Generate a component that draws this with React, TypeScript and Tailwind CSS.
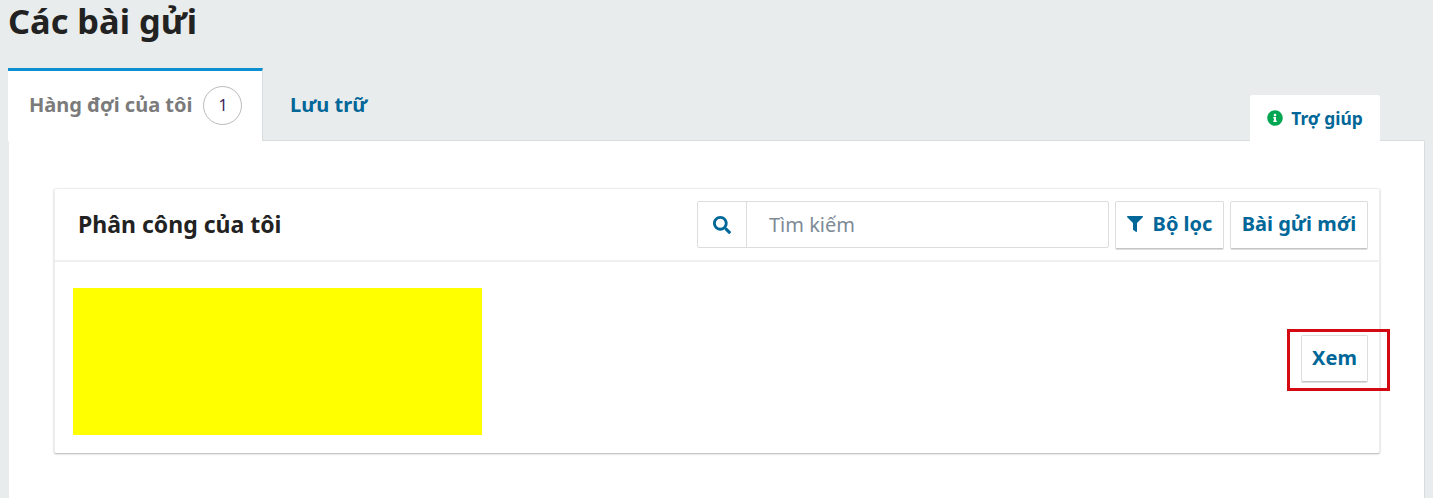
import React from "react";
import { FaInfoCircle, FaFilter, FaSearch } from "react-icons/fa";

const font = "font-['Noto_Sans','Open_Sans',sans-serif]";

export default function App() {
  return (
    <div className={`${font} h-[498px] w-[1433px] overflow-hidden bg-[#e9ecec]`}>
      <h1 className="ml-2 h-[68px] text-[34.4px] font-bold leading-[42px] text-[#222222]">Các bài gửi</h1>
      <div className="flex h-[72px] items-end pl-2 pr-[53px]">
        <div className="relative z-10 -mb-px flex h-[73px] w-[255px] shrink-0 items-center border-t-[3px] border-r border-t-[#0a8fd1] border-r-[#d9dcde] bg-white pb-[2px] pl-[21px]">
          <span className="text-[20px] font-bold text-[#7b7b7b]">Hàng đợi của tôi</span>
          <span className="ml-[11px] flex h-[39px] w-[39px] items-center justify-center rounded-full border border-[#bbbbbb] text-[16px] text-[#3d1f5c]">1</span>
        </div>
        <div className="flex h-[72px] items-center pl-[27px] pt-[2px]">
          <span className="text-[20px] font-bold text-[#006798]">Lưu trữ</span>
        </div>
        <div className="relative z-10 -mb-px ml-auto flex h-[46px] w-[130px] items-center justify-center gap-[8px] rounded-t-[2px] bg-white">
          <FaInfoCircle className="text-[16px] text-[#00a651]" />
          <span className="text-[17.4px] font-bold text-[#006798]">Trợ giúp</span>
        </div>
      </div>
      <div className="ml-[9px] mr-[8px] h-[358px] rounded-tr-[2px] border-t border-r border-[#d9dcde] bg-white pl-[45px] pr-[44px] pt-[47px]">
        <div className="h-[265px] rounded-[2px] border-t border-l border-r border-[#eeeeee] shadow-[0_1px_2px_rgba(0,0,0,0.3)]">
          <div className="flex h-[73px] items-center border-b-2 border-[#f0f0f0] pl-[23px] pr-[11px]">
            <h2 className="text-[23px] font-bold text-[#222222]">Phân công của tôi</h2>
            <div className="ml-auto flex h-[47px] w-[412px] rounded-[2px] border border-[#dddddd]">
              <div className="flex w-[49px] items-center justify-center border-r border-[#dddddd]">
                <FaSearch className="text-[18px] text-[#006798]" />
              </div>
              <span className="flex items-center pl-[22px] text-[20px] text-[#7d8a96]">Tìm kiếm</span>
            </div>
            <button className="ml-[6px] flex h-[48px] w-[109px] items-center justify-center gap-[10px] rounded-[2px] border border-[#dddddd] border-b-[#c4c4c4] pb-[2px] text-[20px] font-bold text-[#006798] shadow-[0_1px_0_#dddddd]">
              <FaFilter className="text-[16px]" />
              <span>Bộ lọc</span>
            </button>
            <button className="ml-[6px] h-[48px] w-[138px] rounded-[2px] border border-[#dddddd] border-b-[#c4c4c4] pb-[2px] text-[20px] font-bold text-[#006798] shadow-[0_1px_0_#dddddd]">Bài gửi mới</button>
          </div>
          <div className="flex items-center pl-[18px] pr-[11px] pt-[26px]">
            <div className="h-[147px] w-[409px] bg-[#ffff00]" />
            <div className="relative mb-[6px] ml-auto">
              <button className="block h-[47px] w-[67px] rounded-[2px] border border-[#dddddd] border-b-[#c4c4c4] pb-[2px] text-[20px] font-bold text-[#006798] shadow-[0_1px_0_#dddddd]">Xem</button>
              <div className="absolute -bottom-[9px] -left-[14px] -right-[22px] -top-[6px] border-[3px] border-[#d40a12]" />
            </div>
          </div>
        </div>
      </div>
    </div>
  );
}
